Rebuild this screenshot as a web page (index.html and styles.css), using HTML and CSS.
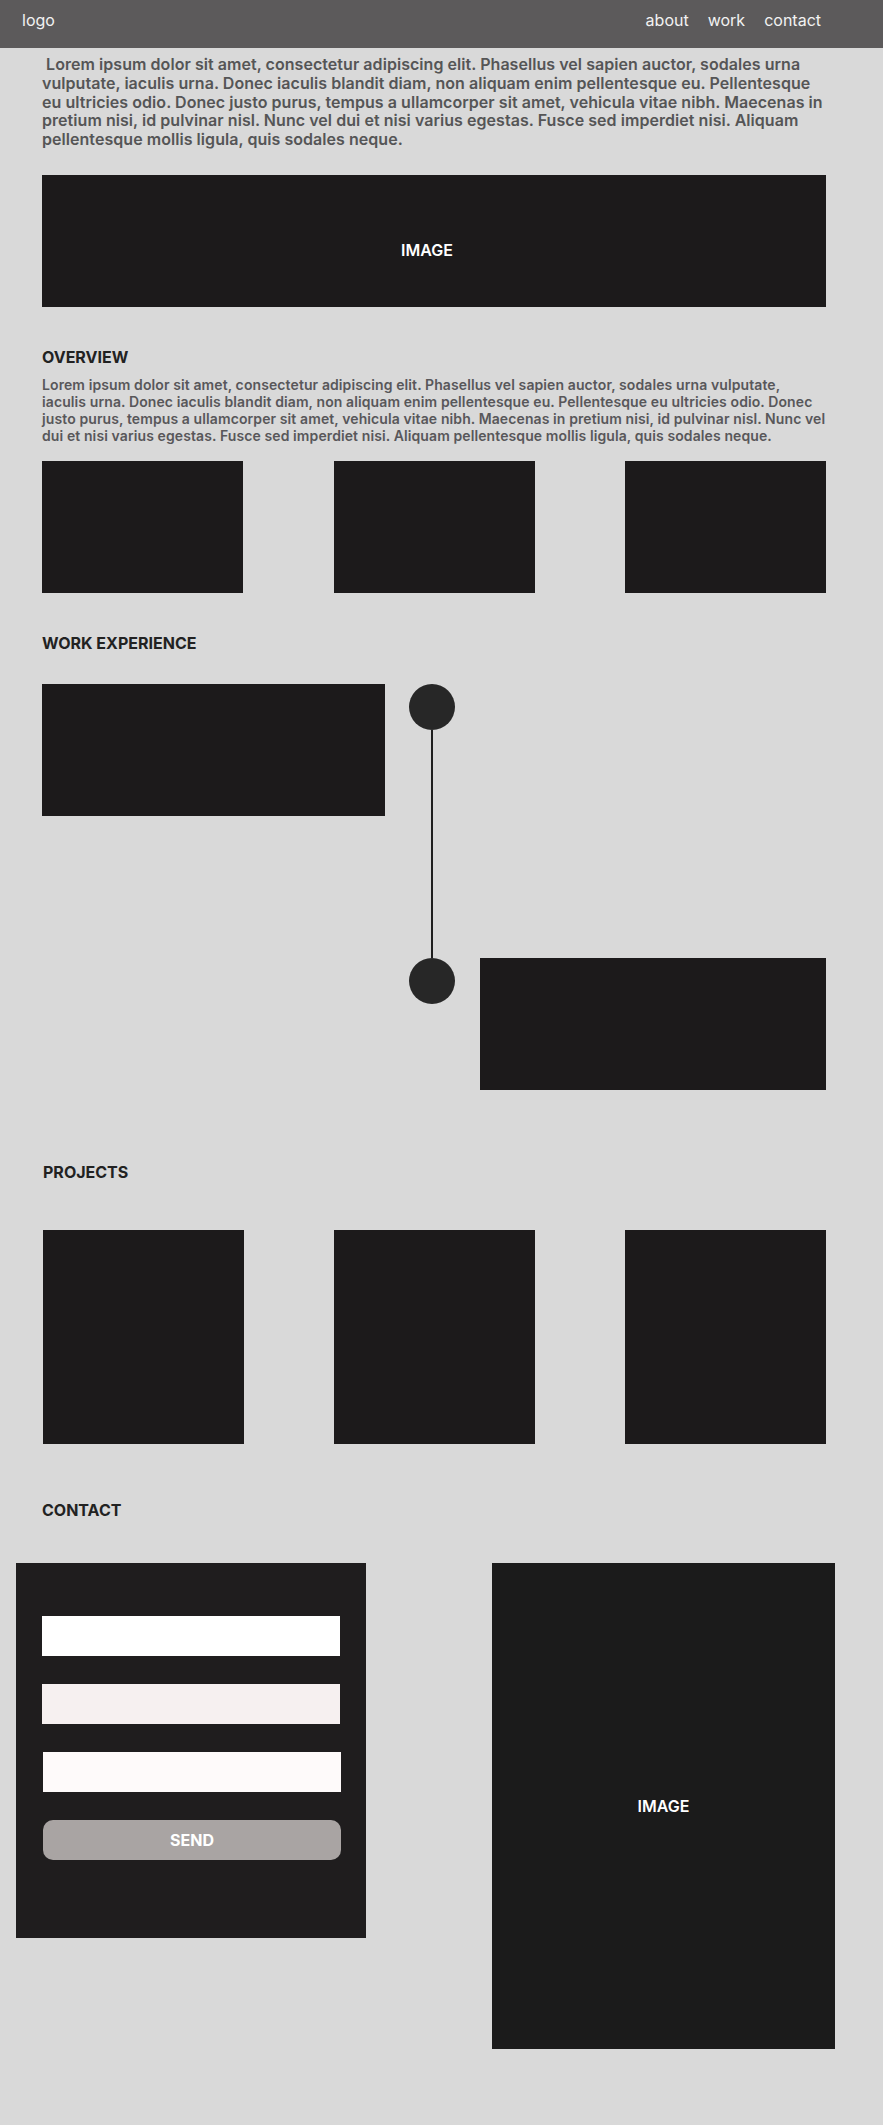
FILE: index.html
```html
<!DOCTYPE html>
<html lang="en">
<head>
    <meta charset="UTF-8">
    <meta name="viewport" content="width=device-width, initial-scale=1.0">
    <title>Portfolio</title>
    <link rel="stylesheet" href="styles.css">
</head>
<body>

    <!-- Top bar -->
    <header class="topbar">
        <div class="logo">logo</div>
        <nav class="menu">
            <a href="#">about</a>
            <a href="#">work</a>
            <a href="#">contact</a>
        </nav>
    </header>

    <main class="page">

        <p class="intro">&nbsp;Lorem ipsum dolor sit amet, consectetur adipiscing elit. Phasellus vel sapien auctor, sodales urna vulputate, iaculis urna. Donec iaculis blandit diam, non aliquam enim pellentesque eu. Pellentesque eu ultricies odio. Donec justo purus, tempus a ullamcorper sit amet, vehicula vitae nibh. Maecenas in pretium nisi, id pulvinar nisl. Nunc vel dui et nisi varius egestas. Fusce sed imperdiet nisi. Aliquam pellentesque mollis ligula, quis sodales neque.</p>

        <div class="hero">IMAGE</div>

        <!-- Overview -->
        <h2 class="section-title overview-title">OVERVIEW</h2>
        <p class="note">Lorem ipsum dolor sit amet, consectetur adipiscing elit. Phasellus vel sapien auctor, sodales urna vulputate, iaculis urna. Donec iaculis blandit diam, non aliquam enim pellentesque eu. Pellentesque eu ultricies odio. Donec justo purus, tempus a ullamcorper sit amet, vehicula vitae nibh. Maecenas in pretium nisi, id pulvinar nisl. Nunc vel dui et nisi varius egestas. Fusce sed imperdiet nisi. Aliquam pellentesque mollis ligula, quis sodales neque.</p>

        <div class="tiles">
            <div class="tile"></div>
            <div class="tile"></div>
            <div class="tile"></div>
        </div>

        <!-- Work experience timeline -->
        <h2 class="section-title work-title">WORK EXPERIENCE</h2>
        <div class="timeline">
            <div class="job job-first"></div>
            <div class="track">
                <div class="dot"></div>
                <div class="line"></div>
                <div class="dot"></div>
            </div>
            <div class="job job-second"></div>
        </div>

        <!-- Projects -->
        <h2 class="section-title projects-title">PROJECTS</h2>
        <div class="tiles projects">
            <div class="tile"></div>
            <div class="tile"></div>
            <div class="tile"></div>
        </div>

        <!-- Contact -->
        <h2 class="section-title contact-title">CONTACT</h2>
        <div class="contact">
            <form class="contact-form">
                <input type="text" class="field field-name">
                <input type="email" class="field field-email">
                <input type="text" class="field field-message">
                <button type="button" class="send">SEND</button>
            </form>
            <div class="contact-image">IMAGE</div>
        </div>

    </main>

</body>
</html>
```

FILE: styles.css
```css
html {
    background-color: #d9d9d9;
}

body {
    margin: 0;
    font-family: Inter, "Noto Sans", sans-serif;
    background-color: #d9d9d9;
    min-height: 2125px;
}

/* Top bar */
.topbar {
    height: 48px;
    box-sizing: border-box;
    padding: 11px 62px 0 22px;
    background-color: #5c5a5b;
    display: flex;
    justify-content: space-between;
    align-items: flex-start;
    color: #f2f2f2;
    font-size: 16px;
    line-height: 19px;
}

.menu {
    display: flex;
    gap: 19px;
}

.menu a {
    color: #f2f2f2;
    text-decoration: none;
}

/* Page content */
.page {
    width: 784px;
    padding: 0 0 76px 42px;
}

.intro {
    margin: 7px 0 0;
    font-size: 16px;
    line-height: 18.8px;
    font-weight: 600;
    letter-spacing: 0.05px;
    color: #555556;
}

.hero {
    margin-top: 26px;
    height: 132px;
    background-color: #1c1a1b;
    color: #fff;
    font-size: 16px;
    font-weight: 600;
    display: flex;
    align-items: center;
    justify-content: center;
    padding: 18px 14px 0 0;
    box-sizing: border-box;
}

.section-title {
    margin: 0;
    font-size: 16px;
    line-height: 19px;
    font-weight: 700;
    color: #222;
}

.overview-title {
    margin-top: 41px;
}

.note {
    margin: 9px 0 0;
    font-size: 14px;
    line-height: 17px;
    font-weight: 600;
    letter-spacing: 0.1px;
    color: #58575a;
}

.tiles {
    margin-top: 17px;
    display: flex;
    justify-content: space-between;
}

.tile {
    width: 201px;
    height: 132px;
    background-color: #1c1a1b;
}

/* Work experience */
.work-title {
    margin-top: 41px;
}

.timeline {
    margin-top: 31px;
    display: grid;
    grid-template-columns: 343px 46px 347px;
    grid-template-rows: 274px 132px;
    justify-content: space-between;
}

.job {
    height: 132px;
    background-color: #1c1a1b;
}

.job-first {
    grid-column: 1;
    grid-row: 1;
}

.job-second {
    grid-column: 3;
    grid-row: 2;
    margin-left: 1px;
}

.track {
    grid-column: 2;
    grid-row: 1 / 3;
    display: flex;
    flex-direction: column;
    align-items: center;
}

.dot {
    width: 46px;
    height: 46px;
    border-radius: 50%;
    background-color: #272727;
}

.line {
    width: 2px;
    height: 228px;
    background-color: #1f1f1f;
}

/* Projects */
.projects-title {
    margin-top: 73px;
    padding-left: 1px;
}

.projects {
    margin-top: 48px;
    padding-left: 1px;
}

.projects .tile {
    height: 214px;
}

/* Contact */
.contact-title {
    margin-top: 57px;
}

.contact {
    margin: 43px 0 0 -26px;
    width: 819px;
    display: flex;
    justify-content: space-between;
    align-items: flex-start;
}

.contact-form {
    width: 350px;
    box-sizing: border-box;
    padding: 53px 26px 78px;
    background-color: #1f1d1e;
    display: flex;
    flex-direction: column;
    gap: 28px;
}

.field {
    width: 298px;
    height: 40px;
    box-sizing: border-box;
    border: none;
    margin: 0;
    padding: 0 10px;
}

.field-name {
    background-color: #ffffff;
}

.field-email {
    background-color: #f6f0f0;
}

.field-message {
    background-color: #fefafa;
    margin-left: 1px;
}

.send {
    width: 298px;
    height: 40px;
    margin-left: 1px;
    border: none;
    border-radius: 10px;
    background-color: #a9a4a3;
    color: #fff;
    font-family: Inter, "Noto Sans", sans-serif;
    font-size: 16px;
    font-weight: 700;
    cursor: pointer;
}

.contact-image {
    width: 343px;
    height: 486px;
    background-color: #1b1b1b;
    color: #fff;
    font-size: 16px;
    font-weight: 600;
    display: flex;
    align-items: center;
    justify-content: center;
}
```
